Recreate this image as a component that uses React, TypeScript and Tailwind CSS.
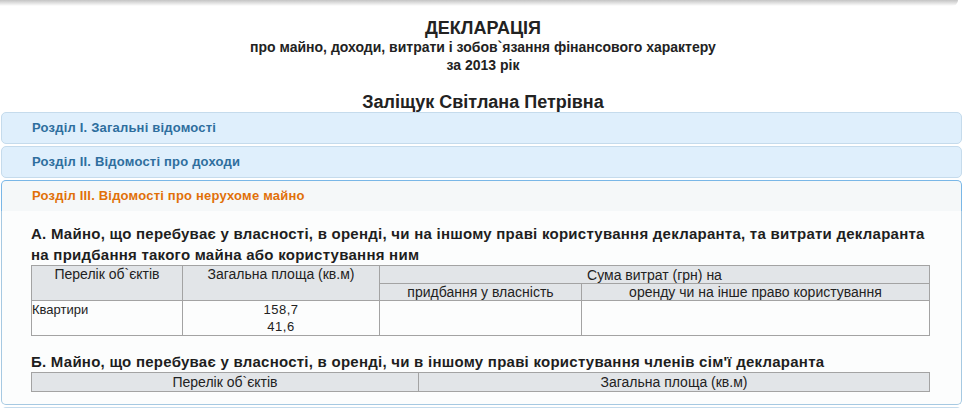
import React from 'react';

const font = { fontFamily: '"Liberation Sans", Arial, sans-serif' };

function SectionHeader({ title, active }: { title: string; active?: boolean }) {
  if (active) {
    return (
      <div className="h-[31px] flex items-center pl-[30px] border border-b-0 border-[#79b7e7] rounded-t-[5px] bg-[#f5f8f9] text-[13px] font-bold tracking-[0.2px] text-[#e17009]">
        {title}
      </div>
    );
  }
  return (
    <div className="h-[32px] flex items-center pl-[30px] border border-[#c5dbec] rounded-[5px] bg-[#dfeffc] text-[13px] font-bold tracking-[0.2px] text-[#2e6e9e]">
      {title}
    </div>
  );
}

const th = 'border border-[#a3a3a3] bg-[#e2e5e8] font-normal text-[14px]';
const td = 'border border-[#a3a3a3]';

export default function App() {
  return (
    <div className="bg-white text-[#222] h-[408px] overflow-hidden" style={font}>
      {/* top shadow */}
      <div className="h-[6px] mr-[8px] bg-linear-to-b from-[#c4c4c4] to-white rounded-br-lg" />

      {/* Title */}
      <div className="text-center">
        <h1 className="mt-[12px] text-[18px] leading-[20px] font-bold">ДЕКЛАРАЦІЯ</h1>
        <p className="text-[14px] leading-[18px] font-bold">
          про майно, доходи, витрати і зобов`язання фінансового характеру
        </p>
        <p className="text-[14px] leading-[18px] font-bold">за 2013 рік</p>
        <h2 className="mt-[18px] text-[18px] leading-[20px] font-bold">Заліщук Світлана Петрівна</h2>
      </div>

      {/* Accordion */}
      <div className="pl-px pr-[4px] flex flex-col gap-[2px]">
        <SectionHeader title="Розділ І. Загальні відомості" />
        <SectionHeader title="Розділ ІІ. Відомості про доходи" />
        <div>
          <SectionHeader title="Розділ ІІІ. Відомості про нерухоме майно" active />
          <div className="border border-t-0 border-[#a6c9e2] rounded-b-[5px] bg-[#fcfdfd] pt-[12px] pb-[12px] pl-[29px] pr-[26px]">
            <h3 className="text-[15px] leading-[21px] font-bold tracking-[0.25px] text-[#1e1e1e]">
              А. Майно, що перебуває у власності, в оренді, чи на іншому праві користування декларанта, та витрати декларанта на придбання такого майна або користування ним
            </h3>
            <table className="w-[899px] border-collapse text-[13px] leading-[16px]">
              <colgroup>
                <col className="w-[151px]" />
                <col className="w-[197px]" />
                <col className="w-[202px]" />
                <col />
              </colgroup>
              <thead>
                <tr className="h-[18px]">
                  <th rowSpan={2} className={`${th} align-top`}>Перелік об`єктів</th>
                  <th rowSpan={2} className={`${th} align-top`}>Загальна площа (кв.м)</th>
                  <th colSpan={2} className={th}>Сума витрат (грн) на</th>
                </tr>
                <tr className="h-[17px]">
                  <th className={th}>придбання у власність</th>
                  <th className={th}>оренду чи на інше право користування</th>
                </tr>
              </thead>
              <tbody>
                <tr className="h-[34px]">
                  <td className={`${td} align-top leading-[17px]`}>Квартири</td>
                  <td className={`${td} align-top text-center leading-[17px] tracking-[0.5px]`}>
                    <div>158,7</div>
                    <div>41,6</div>
                  </td>
                  <td className={td} />
                  <td className={td} />
                </tr>
              </tbody>
            </table>

            <h3 className="mt-[15px] text-[15px] leading-[21px] font-bold tracking-[0.25px] text-[#1e1e1e]">
              Б. Майно, що перебуває у власності, в оренді, чи в іншому праві користування членів сім'ї декларанта
            </h3>
            <table className="w-[899px] border-collapse text-[13px] leading-[16px]">
              <colgroup>
                <col className="w-[387px]" />
                <col />
              </colgroup>
              <thead>
                <tr className="h-[19px]">
                  <th className={th}>Перелік об`єктів</th>
                  <th className={th}>Загальна площа (кв.м)</th>
                </tr>
              </thead>
            </table>
          </div>
        </div>
        <div className="h-[32px] border border-[#c5dbec] rounded-[5px] bg-[#dfeffc]" />
      </div>
    </div>
  );
}
